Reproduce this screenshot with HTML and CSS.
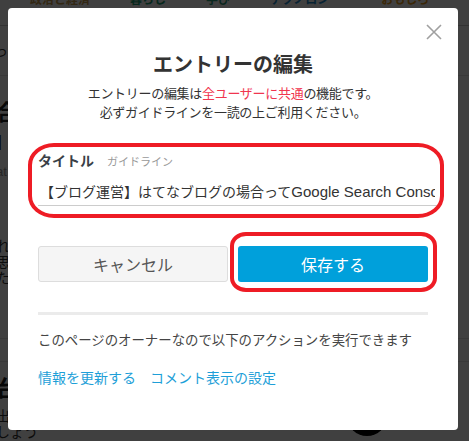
FILE: index.html
```html
<!DOCTYPE html>
<html lang="ja">
<head>
<meta charset="utf-8">
<title>エントリーの編集</title>
<link rel="stylesheet" href="styles.css">
</head>
<body>
<div class="page">
  <nav class="cats">
    <span class="cat c1">政治と経済</span>
    <span class="cat c2">暮らし</span>
    <span class="cat c3">学び</span>
    <span class="cat c4">テクノロジー</span>
    <span class="cat c5">おもしろ</span>
  </nav>
  <div class="sub">って</div>
  <div class="entry">
    <h2 class="e-title">合同会社<br>I</h2>
    <p class="e-meta">at</p>
    <p class="e-text">れる<br>思<br>た</p>
  </div>
  <div class="entry entry2">
    <h2 class="e-title">台</h2>
    <p class="e-text">出<br>しょう</p>
  </div>
  <span class="fab"></span>
</div>

<div class="overlay">
  <div class="modal">
    <button class="close" type="button" aria-label="閉じる">
      <svg width="16" height="16" viewBox="0 0 16 16"><path d="M1 1 L15 15 M15 1 L1 15" stroke="#a0a0a0" stroke-width="1.6" fill="none"/></svg>
    </button>
    <h1 class="title">エントリーの編集</h1>
    <p class="desc">エントリーの編集は<span class="em">全ユーザーに共通</span>の機能です。<br>必ずガイドラインを一読の上ご利用ください。</p>

    <div class="field">
      <div class="label-row"><span class="label">タイトル</span><span class="guide">ガイドライン</span></div>
      <div class="input"><span class="input-text">【ブログ運営】はてなブログの場合って<span class="latin">Google Search Console</span>の登録は必要？</span></div>
      <span class="mark mark-field"></span>
    </div>

    <div class="actions">
      <button class="btn cancel" type="button">キャンセル</button>
      <div class="save-wrap">
        <button class="btn save" type="button">保存する</button>
        <span class="mark mark-save"></span>
      </div>
    </div>

    <hr class="divider">
    <p class="owner">このページのオーナーなので以下のアクションを実行できます</p>
    <div class="links">
      <a class="link" href="#">情報を更新する</a>
      <a class="link" href="#">コメント表示の設定</a>
    </div>
  </div>
</div>
</body>
</html>
```

FILE: styles.css
```css
html, body {
  margin: 0;
  padding: 0;
}
body {
  font-family: "Liberation Sans", "Noto Sans CJK JP", sans-serif;
  color: #333;
  width: 469px;
  height: 441px;
  overflow: hidden;
}

/* background page */
.page {
  position: relative;
  height: 441px;
  background: #fff;
  overflow: hidden;
}
.cats {
  display: flex;
  gap: 40px;
  padding-left: 30px;
  margin-top: -7px;
  height: 33px;
  box-sizing: border-box;
  border-bottom: 1px solid #ccc;
  font-size: 12px;
  font-weight: bold;
  line-height: 14px;
}
.c1 { color: #c89a4e; }
.c2 { color: #1a9a70; }
.c3 { color: #2a9a7a; }
.c4 { color: #1e88c8; }
.c5 { color: #e89a20; }
.sub {
  height: 50px;
  box-sizing: border-box;
  border-bottom: 1px solid #e4e4e4;
  font-size: 14px;
  line-height: 50px;
  margin-left: -6px;
}
.entry {
  padding: 22px 0 0 0;
  margin-left: -4px;
}
.e-title {
  margin: 0;
  font-size: 22px;
  line-height: 30px;
  font-weight: bold;
  color: #222;
}
.e-meta {
  margin: 4px 0 0;
  font-size: 13px;
  color: #999;
  line-height: 20px;
}
.e-text {
  margin: 56px 0 0;
  font-size: 14px;
  line-height: 16px;
  color: #333;
  padding-bottom: 52px;
  border-bottom: 1px solid #e4e4e4;
}
.entry2 {
  border-top: 1px solid #e4e4e4;
  margin-top: 22px;
  padding-top: 12px;
}
.entry2 .e-text {
  margin-top: 4px;
  border-bottom: 0;
}
.fab {
  position: absolute;
  left: 347px;
  top: 396px;
  width: 40px;
  height: 40px;
  border-radius: 50%;
  background: #000;
}

/* overlay + modal */
.overlay {
  position: fixed;
  inset: 0;
  background: rgba(0, 0, 0, 0.75);
  padding: 8px;
}
.modal {
  position: relative;
  width: 450px;
  box-sizing: border-box;
  padding: 42px 30px 42px;
  background: #fff;
  border-radius: 4px;
}
.close {
  position: absolute;
  top: 16px;
  right: 16px;
  width: 16px;
  height: 16px;
  padding: 0;
  border: 0;
  background: none;
  display: block;
}
.close svg { display: block; }
.title {
  margin: 0;
  font-size: 20px;
  line-height: 30px;
  font-weight: bold;
  text-align: center;
  color: #333;
}
.desc {
  margin: 4px 0 0;
  font-size: 13px;
  line-height: 19px;
  letter-spacing: -0.3px;
  text-align: center;
  color: #333;
}
.em { color: #f0364f; }

.field {
  position: relative;
  margin-top: 29px;
}
.label-row {
  display: flex;
  align-items: baseline;
  gap: 13px;
  line-height: 20px;
}
.label {
  font-size: 14px;
  font-weight: bold;
  color: #3a3f47;
}
.guide {
  font-size: 11px;
  color: #999;
}
.input {
  margin-top: 5px;
  width: 400px;
  box-sizing: border-box;
  padding: 1px 3px 0 2px;
  height: 29px;
  line-height: 28px;
  border-bottom: 1px solid #ccc;
  font-size: 14px;
  color: #333;
}
.input-text {
  display: block;
  white-space: nowrap;
  overflow: hidden;
}
.latin {
  font-family: "Liberation Sans", sans-serif;
  font-size: 15px;
}

.mark {
  position: absolute;
  border: 4px solid #ee1c25;
  pointer-events: none;
}
.mark-field {
  left: -10px;
  right: -16px;
  top: -8px;
  bottom: -12px;
  border-radius: 26px / 22px;
}

.actions {
  display: flex;
  gap: 10px;
  margin-top: 40px;
}
.btn {
  display: block;
  width: 190px;
  height: 36px;
  box-sizing: border-box;
  border-radius: 3px;
  font-family: inherit;
  font-size: 16px;
  padding: 0;
}
.cancel {
  background: #f5f5f5;
  border: 1px solid #ddd;
  color: #555;
}
.save-wrap {
  position: relative;
}
.save {
  background: #00a0db;
  border: 0;
  color: #fff;
}
.mark-save {
  left: -8px;
  right: -9px;
  top: -14px;
  bottom: -10px;
  border-radius: 16px / 14px;
}

.divider {
  margin: 30px 0 0;
  height: 3px;
  border: 0;
  background: #ebebeb;
}
.owner {
  margin: 16px 0 0;
  font-size: 13.4px;
  line-height: 20px;
  color: #444;
}
.links {
  display: flex;
  gap: 14px;
  margin-top: 17px;
  font-size: 14px;
  line-height: 20px;
}
.link {
  color: #1e9fd8;
  text-decoration: none;
}
```
